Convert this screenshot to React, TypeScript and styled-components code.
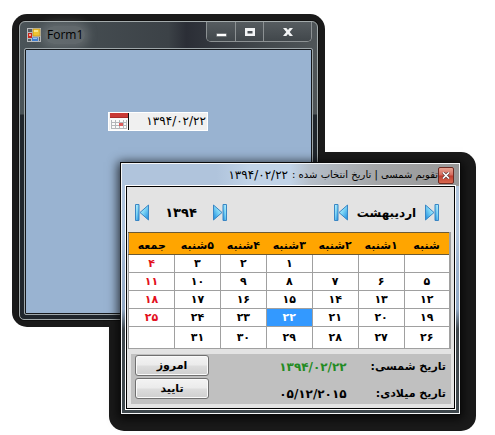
import React from "react";
import styled, { createGlobalStyle } from "styled-components";

const Global = createGlobalStyle`
  * { box-sizing: border-box; }
  body { margin: 0; background: #fff; font-family: "DejaVu Sans", sans-serif; font-size: 11px; color: #000; }
  button { font: inherit; color: inherit; padding: 0; margin: 0; cursor: pointer; }
`;

const Desktop = styled.main`
  position: relative;
  min-height: 100vh;
  overflow: hidden;
`;

const Backdrop = styled.div<{ $place: "form" | "picker" }>`
  position: absolute;
  background: #1a1a1a;
  border-radius: 15px;
  ${(p) =>
    p.$place === "form"
      ? "left: 12px; top: 14px; width: 313px; height: 313px;"
      : "left: 109px; top: 152px; width: 367px; height: 279px;"}
`;

const FormWindow = styled.section`
  position: absolute;
  left: 19px;
  top: 21px;
  width: 299px;
  height: 299px;
  display: flex;
  flex-direction: column;
  padding: 0 5px 5px;
  border: 1px solid #a3aaab;
  border-radius: 6px 6px 5px 5px;
  background: linear-gradient(180deg, transparent 0 92px, #20262c 93px 100%),
    linear-gradient(90deg, #4b5458 0, #3c4247 50%, #2b2e36 56%, #43494d 82%, #4f5558 100%);
  box-shadow: 0 0 0 1px #101010;
`;

const FormTitleBar = styled.header`
  display: flex;
  align-items: flex-start;
  height: 27px;
  flex: none;
`;

const AppIcon = styled.svg`
  flex: none;
  margin: 6px 4px 0 2px;
`;

const FormTitle = styled.h1`
  margin: 4px 0 0;
  padding: 0 2px;
  font: 400 12px/18px "Open Sans", "Noto Sans", sans-serif;
  color: #000;
  border-radius: 9px;
  background: rgba(150, 156, 158, 0.35);
  box-shadow: 0 0 8px 4px rgba(150, 156, 158, 0.35);
`;

const WindowControls = styled.div`
  display: flex;
  margin-left: auto;
  height: 20px;
  border: 1px solid #8c9193;
  border-top: 0;
  border-radius: 0 0 5px 5px;
`;

const ControlButton = styled.button<{ $wide?: boolean }>`
  display: flex;
  align-items: center;
  justify-content: center;
  width: ${(p) => (p.$wide ? 48 : 28)}px;
  border: 0;
  background: linear-gradient(#565c60, #41474b);
  & + & { border-left: 1px solid #8c9193; }
  &:first-child { border-bottom-left-radius: 4px; }
  &:last-child { border-bottom-right-radius: 4px; }
`;

const FormBody = styled.div`
  flex: 1;
  display: flex;
  flex-direction: column;
  padding: 62px 0 0 82px;
  border: 1px solid #15181b;
  outline: 1px solid #9ea6a9;
  border-radius: 1px;
  background: #99b3d1;
`;

const DateField = styled.div`
  display: flex;
  align-items: stretch;
  width: 100px;
  height: 19px;
  background: #f0f0f0;
  border: 1px solid #fff;
`;

const CalendarButton = styled.button`
  display: flex;
  width: 20px;
  border: 0;
  border-right: 1px solid #111;
  background: #f0f0f0;
`;

const DateInput = styled.input`
  flex: 1;
  min-width: 0;
  border: 0;
  padding: 0 1px 0 0;
  background: transparent;
  text-align: right;
  font: 400 12px/15px "DejaVu Sans", sans-serif;
  color: #000;
`;

const PickerWindow = styled.section`
  position: absolute;
  left: 121px;
  top: 163px;
  width: 339px;
  height: 251px;
  display: flex;
  flex-direction: column;
  padding: 0 4px 4px;
  border: 1px solid #f4f6f8;
  background: linear-gradient(180deg, #b0c4dc 0 70px, #9fb4cf 100px, #91a8c4 145px, #40484e 165px, #3d464b 100%);
  box-shadow: 0 0 0 1px #0a0a0a, 0 2px 10px 3px rgba(0, 0, 0, 0.75);
`;

const PickerTitleBar = styled.header`
  display: flex;
  align-items: center;
  height: 22px;
  flex: none;
  margin: 0 -4px;
  padding: 0 5px 0 0;
  background: linear-gradient(90deg, #b0c4dc 0 28%, #c1d3e7 38% 50%, #b5bec8 56%, #a4a6a8 75%, #979797 100%);
`;

const CloseButton = styled.button`
  display: flex;
  align-items: center;
  justify-content: center;
  width: 16px;
  height: 17px;
  border: 1px solid #6d2a22;
  border-radius: 2px;
  background: linear-gradient(#e6a392, #d5685b 48%, #bd3b2e 52%, #d9694f);
`;

const PickerTitle = styled.h2`
  margin: 0;
  font: 400 10px/20px "DejaVu Sans", sans-serif;
  white-space: nowrap;
`;

const TitleDate = styled.span`
  margin-right: 4px;
  font-size: 12px;
  line-height: 20px;
`;

const PickerBody = styled.div`
  flex: 1;
  display: flex;
  flex-direction: column;
  padding: 0 3px 4px 1px;
  border: 1px solid #000;
  outline: 1px solid #fff;
  background: #e3e3e3;
`;

const Navigation = styled.nav`
  display: flex;
  justify-content: space-between;
  align-items: center;
  height: 45px;
  padding: 6px 12px 0 7px;
`;

const Stepper = styled.div<{ $width: number; $size: number }>`
  display: flex;
  align-items: center;
  justify-content: space-between;
  width: ${(p) => p.$width}px;
  font-size: ${(p) => p.$size}px;
  font-weight: 700;
`;

const StepButton = styled.button`
  display: flex;
  border: 0;
  background: transparent;
`;

const MonthTable = styled.table`
  width: 100%;
  table-layout: fixed;
  border-collapse: collapse;
  font-weight: 700;
  text-align: center;
  background: #fff;
  border: 1px solid #8c8c8c;
  border-right: 2px solid #a0a0a0;
`;

const WeekDay = styled.th`
  height: 22px;
  padding: 4px 0 0;
  font-size: 11px;
  line-height: 16px;
  background: #ffa500;
  border-top: 1px solid #6b5a36;
  border-bottom: 1px solid #6b5a36;
  white-space: nowrap;
`;

const DayCell = styled.td<{ $holiday?: boolean; $selected?: boolean; $tall?: boolean }>`
  height: ${(p) => (p.$tall ? 22 : 18)}px;
  padding: 0;
  line-height: 17px;
  border: 1px solid #a0a0a0;
  color: ${(p) => (p.$selected ? "#fff" : p.$holiday ? "#e3101c" : "#000")};
  background: ${(p) => (p.$selected ? "#3399ff" : "#fff")};
`;

const Summary = styled.div`
  flex: 1;
  display: flex;
  justify-content: space-between;
  margin: 5px 0 0 3px;
  padding: 1px 5px 0 4px;
  background: #c0c0c0;
`;

const Actions = styled.div`
  display: flex;
  flex-direction: column;
  gap: 2px;
  width: 74px;
`;

const ActionButton = styled.button`
  height: 21px;
  border: 1px solid #707070;
  border-radius: 3px;
  font-weight: 700;
  line-height: 16px;
  background: linear-gradient(#f3f3f3, #ebebeb 48%, #dddddd 52%, #cfcfcf);
  box-shadow: inset 0 0 0 1px #fafafa;
`;

const Dates = styled.dl`
  display: grid;
  grid-template-columns: auto auto;
  align-content: start;
  column-gap: 24px;
  row-gap: 11px;
  margin: 0;
  padding-top: 4px;
  line-height: 16px;
  font-weight: 700;
`;

const Term = styled.dt`
  margin: 0;
`;

const Value = styled.dd<{ $accent?: boolean }>`
  margin: 0;
  font-size: 12px;
  text-align: right;
  color: ${(p) => (p.$accent ? "#228b22" : "#000")};
`;

const StepIcon = ({ forward }: { forward?: boolean }) => (
  <svg width="14" height="17" viewBox="0 0 14 17" aria-hidden="true">
    <defs>
      <linearGradient id={forward ? "stepF" : "stepB"} x1="0" y1="0" x2="1" y2="1">
        <stop offset="0" stopColor="#c9f2fc" />
        <stop offset="0.45" stopColor="#7fd6f6" />
        <stop offset="1" stopColor="#1687dc" />
      </linearGradient>
    </defs>
    <g
      transform={forward ? "translate(14 0) scale(-1 1)" : undefined}
      fill={`url(#${forward ? "stepF" : "stepB"})`}
      stroke="#3a86c4"
    >
      <path d="M.5.5h3.500v16H.5z" />
      <path d="M13.500 1v15L5 8.500z" />
    </g>
  </svg>
);

const weekDays = ["شنبه", "۱شنبه", "۲شنبه", "۳شنبه", "۴شنبه", "۵شنبه", "جمعه"];
const weeks = [
  ["", "", "", "۱", "۲", "۳", "۴"],
  ["۵", "۶", "۷", "۸", "۹", "۱۰", "۱۱"],
  ["۱۲", "۱۳", "۱۴", "۱۵", "۱۶", "۱۷", "۱۸"],
  ["۱۹", "۲۰", "۲۱", "۲۲", "۲۳", "۲۴", "۲۵"],
  ["۲۶", "۲۷", "۲۸", "۲۹", "۳۰", "۳۱", ""],
];
const selectedDay = "۲۲";
const selectedDate = "۱۳۹۴/۰۲/۲۲";

export default function App() {
  return (
    <>
      <Global />
      <Desktop>
        <Backdrop $place="form" />
        <Backdrop $place="picker" />
        <FormWindow>
          <FormTitleBar>
            <AppIcon width="14" height="14" viewBox="0 0 14 14" aria-hidden="true">
              <path d="M0 0h14v14H0z" fill="#b9bcbe" />
              <path d="M1 1h4v3H1zM1 11h3v2H1zM12 9h1v4h-1z" fill="#555b60" />
              <path d="M6 1h7v7H6z" fill="#f2c62f" stroke="#b98c12" strokeWidth=".6" />
              <path d="M7 2h4v2H7z" fill="#fbe88a" />
              <path d="M1 5h4v5H1z" fill="#c8261b" />
              <path d="M2 6h2v2H2z" fill="#f1a79b" />
              <path d="M5 9.500h6V13H5z" fill="#3f7ed0" />
              <path d="M6 10h4v1H6z" fill="#9cc3f2" />
            </AppIcon>
            <FormTitle>Form1</FormTitle>
            <WindowControls>
              <ControlButton aria-label="Minimize">
                <svg width="11" height="14" viewBox="0 0 11 14">
                  <path d="M.5 8.500h10v3H.5z" fill="#fff" stroke="#4a5054" strokeWidth=".5" />
                </svg>
              </ControlButton>
              <ControlButton aria-label="Maximize">
                <svg width="10" height="8" viewBox="0 0 10 8">
                  <path d="M0 0h10v8H0zM2.500 3v2.500h5V3z" fill="#f2f4f5" fillRule="evenodd" />
                </svg>
              </ControlButton>
              <ControlButton aria-label="Close" $wide>
                <svg width="10" height="8" viewBox="0 0 10 8">
                  <path d="M0 0h3.300L5 2 6.700 0H10L6.700 4 10 8H6.700L5 6 3.300 8H0l3.300-4z" fill="#f2f4f5" />
                </svg>
              </ControlButton>
            </WindowControls>
          </FormTitleBar>
          <FormBody>
            <DateField>
              <CalendarButton aria-label="تقویم">
                <svg width="19" height="17" viewBox="0 0 19 17">
                  <path d="M1 0h18v17H1z" fill="#fafafa" />
                  <path d="M1 0h18v4H1z" fill="#c93a36" />
                  <path d="M1 4h18v1H1z" fill="#a92c2a" />
                  <path d="M2.500 7v9M6.500 7v9M10.500 7v9M14.500 7v9M17.500 7v9M2 9.500h16M2 12.500h16M2 15.500h16" stroke="#b4b7ba" fill="none" />
                  <path d="M10 10h4v3h-4z" fill="#dc5c5c" />
                </svg>
              </CalendarButton>
              <DateInput aria-label="تاریخ" dir="ltr" defaultValue={selectedDate} />
            </DateField>
          </FormBody>
        </FormWindow>
        <PickerWindow lang="fa">
          <PickerTitleBar dir="rtl">
            <CloseButton aria-label="بستن">
              <svg width="8" height="7" viewBox="0 0 8 7">
                <path d="M1 .5l6 6M7 .5l-6 6" stroke="#5b3a38" strokeWidth="3" />
                <path d="M1 .5l6 6M7 .5l-6 6" stroke="#fff" strokeWidth="1.600" />
              </svg>
            </CloseButton>
            <PickerTitle>تقویم شمسی | تاریخ انتخاب شده :</PickerTitle>
            <TitleDate dir="ltr">{selectedDate}</TitleDate>
          </PickerTitleBar>
          <PickerBody>
            <Navigation>
              <Stepper $width={92} $size={13}>
                <StepButton aria-label="سال قبل"><StepIcon /></StepButton>
                <span>۱۳۹۴</span>
                <StepButton aria-label="سال بعد"><StepIcon forward /></StepButton>
              </Stepper>
              <Stepper $width={105} $size={12}>
                <StepButton aria-label="ماه قبل"><StepIcon /></StepButton>
                <span>اردیبهشت</span>
                <StepButton aria-label="ماه بعد"><StepIcon forward /></StepButton>
              </Stepper>
            </Navigation>
            <MonthTable dir="rtl">
              <thead>
                <tr>{weekDays.map((d) => <WeekDay key={d} scope="col">{d}</WeekDay>)}</tr>
              </thead>
              <tbody>
                {weeks.map((week, r) => (
                  <tr key={r}>
                    {week.map((day, c) => (
                      <DayCell key={c} $holiday={c === 6} $selected={day === selectedDay} $tall={r === 4}>
                        {day}
                      </DayCell>
                    ))}
                  </tr>
                ))}
              </tbody>
            </MonthTable>
            <Summary>
              <Actions>
                <ActionButton>امروز</ActionButton>
                <ActionButton>تایید</ActionButton>
              </Actions>
              <Dates dir="rtl">
                <Term>تاریخ شمسی:</Term>
                <Value $accent dir="ltr">{selectedDate}</Value>
                <Term>تاریخ میلادی:</Term>
                <Value dir="ltr">۰۵/۱۲/۲۰۱۵</Value>
              </Dates>
            </Summary>
          </PickerBody>
        </PickerWindow>
      </Desktop>
    </>
  );
}
